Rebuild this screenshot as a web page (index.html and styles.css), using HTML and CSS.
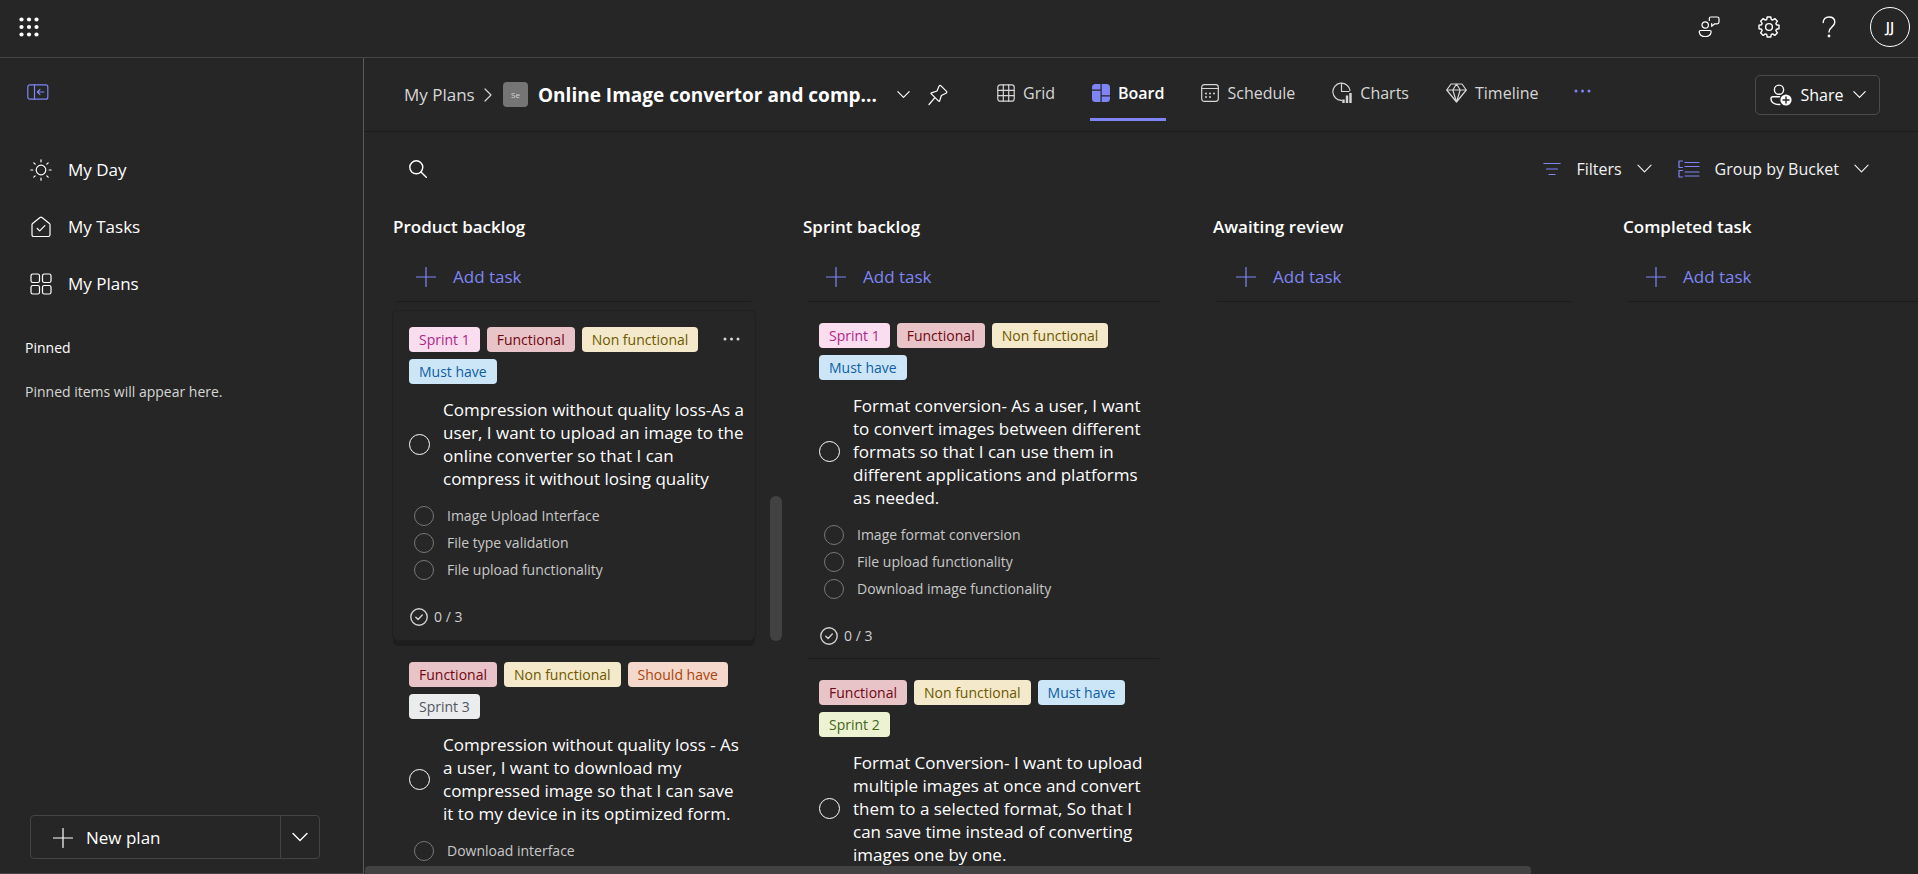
FILE: index.html
```html
<!DOCTYPE html>
<html lang="en">
<head>
<meta charset="utf-8">
<title>Planner</title>
<link rel="stylesheet" href="styles.css">
</head>
<body>
<svg class="sprite" aria-hidden="true">
  <symbol id="chev-down" viewBox="0 0 16 16"><path d="M1 4.5l7 7 7-7"/></symbol>
  <symbol id="plus" viewBox="0 0 20 20"><path d="M10 .5v19M.5 10h19"/></symbol>
  <symbol id="done" viewBox="0 0 18 18"><circle cx="9" cy="9" r="8.2"/><path d="M5.8 9.2l2.3 2.3 4.2-4.4"/></symbol>
</svg>

<header class="topbar">
  <button class="icon-btn waffle" aria-label="App launcher">
    <svg width="20" height="20" viewBox="0 0 20 20" class="fill"><circle cx="2.5" cy="2.5" r="2.1"/><circle cx="10" cy="2.5" r="2.1"/><circle cx="17.5" cy="2.5" r="2.1"/><circle cx="2.5" cy="10" r="2.1"/><circle cx="10" cy="10" r="2.1"/><circle cx="17.5" cy="10" r="2.1"/><circle cx="2.5" cy="17.5" r="2.1"/><circle cx="10" cy="17.5" r="2.1"/><circle cx="17.5" cy="17.5" r="2.1"/></svg>
  </button>
  <div class="top-actions">
    <button class="icon-btn" aria-label="Feedback">
      <svg width="22" height="22" viewBox="0 0 22 22"><circle cx="7.2" cy="9" r="3.2"/><path d="M2.8 14.5h8.8q1.8 0 1.5 1.8-.8 4.2-5.9 4.2t-5.9-4.2Q1 14.500 2.800 14.500z"/><path d="M12.800 1h6.400q1.800 0 1.800 1.800v3.200q0 1.800-1.800 1.800h-2.500l-3 2.500v-2.600M11.300 4.500V2.500q0-1.500 1.500-1.500"/></svg>
    </button>
    <button class="icon-btn" aria-label="Settings">
      <svg width="22" height="22" viewBox="0 0 22 22" class="bold"><circle cx="11" cy="11" r="3.400"/><path d="M9.200 1h3.600l.5 2.600 1.300.5 2.200-1.500 2.600 2.600-1.500 2.200.5 1.300 2.600.5v3.600l-2.600.5-.5 1.300 1.500 2.200-2.600 2.600-2.200-1.500-1.300.5-.5 2.600H9.200l-.5-2.600-1.300-.5-2.200 1.500-2.600-2.600 1.500-2.200-.5-1.300L1 12.800V9.200l2.600-.5.5-1.300-1.500-2.200 2.600-2.600 2.200 1.500 1.300-.5z"/></svg>
    </button>
    <button class="icon-btn" aria-label="Help">
      <svg width="22" height="22" viewBox="0 0 22 22" class="bold"><path d="M5.200 6.500C5.200 3.200 7.500 1 11 1s5.800 2.100 5.800 5.200c0 4.600-5.800 4.800-5.800 9.800"/><circle cx="11" cy="20" r=".7"/></svg>
    </button>
    <button class="avatar" aria-label="Account">JJ</button>
  </div>
</header>

<div class="shell">
  <nav class="sidebar">
    <button class="icon-btn collapse" aria-label="Collapse navigation">
      <svg width="22" height="16" viewBox="0 0 22 16"><rect x=".8" y=".8" width="20" height="14.400" rx="2"/><path d="M7.500.8v14.400M17 8H10.500M13 5.300L10.300 8l2.700 2.700"/></svg>
    </button>
    <ul class="nav">
      <li><a href="#day"><svg width="22" height="22" viewBox="0 0 22 22"><circle cx="11" cy="11" r="4.800"/><path d="M11 .8v2M11 19.200v2M.8 11h2M19.200 11h2M3.800 3.800l1.400 1.400M16.800 16.800l1.400 1.400M3.800 18.200l1.400-1.400M16.800 5.200l1.400-1.400"/></svg>My Day</a></li>
      <li><a href="#tasks"><svg width="22" height="22" viewBox="0 0 22 22"><path d="M2 8.700Q2 8 2.600 7.500L10 1.500q1-.8 2 0l7.400 6q.6.500.6 1.200v10q0 1.800-1.800 1.800H3.800Q2 20.500 2 18.700z"/><path d="M7.200 12.500l2.500 2.400 5.200-5.200"/></svg>My Tasks</a></li>
      <li><a href="#plans"><svg width="22" height="22" viewBox="0 0 22 22"><rect x="1" y="1" width="8.500" height="8.500" rx="1.800"/><rect x="12.500" y="1" width="8.500" height="8.500" rx="1.800"/><rect x="1" y="12.500" width="8.500" height="8.500" rx="1.800"/><rect x="12.500" y="12.500" width="8.500" height="8.500" rx="1.800"/></svg>My Plans</a></li>
    </ul>
    <h2 class="pinned">Pinned</h2>
    <p class="pinned-note">Pinned items will appear here.</p>
    <div class="new-plan">
      <button class="new-main"><svg width="20" height="20"><use href="#plus"/></svg>New plan</button>
      <button class="new-more" aria-label="More plan options"><svg width="16" height="16" class="bold"><use href="#chev-down"/></svg></button>
    </div>
  </nav>

  <main class="main">
    <div class="plan-bar">
      <a class="crumb" href="#plans">My Plans</a>
      <svg class="crumb-sep" width="8" height="14" viewBox="0 0 8 14"><path d="M1 1l6 6-6 6"/></svg>
      <span class="plan-chip">Se</span>
      <h1 class="plan-title">Online Image convertor and comp...</h1>
      <button class="icon-btn title-more" aria-label="Plan options"><svg width="13" height="13" class="bold"><use href="#chev-down"/></svg></button>
      <button class="icon-btn" aria-label="Pin plan"><svg width="20" height="22" viewBox="0 0 20 22"><path d="M11 2.300q.8-1.600 2-.4l5.300 5.300q1.200 1.200-.4 2l-4.500 2.300-1.800 5.500q-.3.900-1 .2L3.300 9.900q-.7-.7.200-1l5.500-1.900zM6.700 13.800L1 20.500"/></svg></button>
      <div class="tabs">
        <a class="tab" href="#grid"><svg width="18" height="18" viewBox="0 0 18 18"><rect x=".8" y=".8" width="16.400" height="16.400" rx="2.500"/><path d="M6.300.8v16.400M11.700.8v16.400M.8 6.300h16.400M.8 11.700h16.400"/></svg>Grid</a>
        <a class="tab active" href="#board"><svg width="18" height="18" viewBox="0 0 18 18" class="fill"><path d="M3.500 0h5v5.500H0v-2Q0 0 3.500 0zM0 6.700h8.500V18h-5Q0 18 0 14.500zM9.700 0h4.800Q18 0 18 3.500v7.800H9.700zM9.700 12.500H18v2q0 3.500-3.500 3.500H9.700z"/></svg>Board</a>
        <a class="tab" href="#schedule"><svg width="18" height="18" viewBox="0 0 18 18"><rect x=".7" y=".7" width="16.600" height="16.600" rx="2.500"/><path d="M.7 4.500h16.600"/><path class="dots" d="M5 9.500h0M9 9.500h0M13 9.500h0M5 13h0M9 13h0"/></svg>Schedule</a>
        <a class="tab" href="#charts"><svg width="20" height="22" viewBox="0 0 20 22"><path d="M10 18.300A8.600 8.600 0 1 1 18 8.500"/><path d="M9.500 1.500v8H17"/><path class="bars" d="M11.500 17.500V21M15 13.500V21M18.500 11V21"/></svg>Charts</a>
        <a class="tab" href="#timeline"><svg width="21" height="20" viewBox="0 0 21 20"><path d="M5 1h11l4.300 6L10.500 19 .7 7zM.7 7h19.600M6.800 7l3.700 12L14.200 7M6.800 7l3.700-6 3.700 6"/></svg>Timeline</a>
        <button class="icon-btn accent" aria-label="More views"><svg width="17" height="4" viewBox="0 0 17 4" class="fill"><circle cx="2" cy="2" r="1.500"/><circle cx="8.500" cy="2" r="1.500"/><circle cx="15" cy="2" r="1.500"/></svg></button>
      </div>
      <button class="share">
        <svg width="22" height="22" viewBox="0 0 22 22" class="bold"><circle cx="9" cy="5.700" r="4.600"/><path d="M9.500 12.800H2.800q-1.800 0-1.800 1.800 0 4 4 5.300 2 .7 4.800.6"/><circle class="solid" cx="16" cy="16" r="5.600"/><path class="cut" d="M16 13v6M13 16h6"/></svg>
        Share
        <svg width="13" height="13" class="bold"><use href="#chev-down"/></svg>
      </button>
    </div>

    <div class="toolbar">
      <button class="icon-btn" aria-label="Search"><svg width="18" height="18" viewBox="0 0 18 18" class="bold"><circle cx="7.300" cy="7.300" r="6.500"/><path d="M12 12l5.500 5.500"/></svg></button>
      <div class="tools">
        <button class="tool"><svg class="accent" width="18" height="14" viewBox="0 0 18 14"><path d="M.8 1.500h16.400M3.500 7h11M6 12.500h6"/></svg>Filters<svg class="tail" width="15" height="15"><use href="#chev-down"/></svg></button>
        <button class="tool"><svg class="accent" width="22" height="18" viewBox="0 0 22 18"><path d="M4.500 1H1v6.500h3.500M4.500 10.500H1V17h3.500M7 2.500h14M7 6.500h14M7 12h14M7 16h14"/></svg>Group by Bucket<svg class="tail" width="15" height="15"><use href="#chev-down"/></svg></button>
      </div>
    </div>

    <div class="board">
      <section class="column">
        <h2>Product backlog</h2>
        <button class="add"><svg width="20" height="20"><use href="#plus"/></svg>Add task</button>
        <div class="cards">
          <article class="card raised">
            <button class="icon-btn card-more" aria-label="More options"><svg width="17" height="4" viewBox="0 0 17 4" class="fill"><circle cx="2" cy="2" r="1.500"/><circle cx="8.500" cy="2" r="1.500"/><circle cx="15" cy="2" r="1.500"/></svg></button>
            <div class="tags"><span class="tag pink">Sprint 1</span><span class="tag red">Functional</span><span class="tag gold">Non functional</span><span class="tag blue">Must have</span></div>
            <label class="task"><input type="checkbox"><span>Compression without quality loss-As a<br>user, I want to upload an image to the<br>online converter so that I can<br>compress it without losing quality</span></label>
            <ul class="checks">
              <li><label><input type="checkbox">Image Upload Interface</label></li>
              <li><label><input type="checkbox">File type validation</label></li>
              <li><label><input type="checkbox">File upload functionality</label></li>
            </ul>
            <div class="count"><svg width="18" height="18" class="bold"><use href="#done"/></svg>0 / 3</div>
          </article>
          <article class="card">
            <div class="tags"><span class="tag red">Functional</span><span class="tag gold">Non functional</span><span class="tag orange">Should have</span><span class="tag grey">Sprint 3</span></div>
            <label class="task"><input type="checkbox"><span>Compression without quality loss - As<br>a user, I want to download my<br>compressed image so that I can save<br>it to my device in its optimized form.</span></label>
            <ul class="checks">
              <li><label><input type="checkbox">Download interface</label></li>
            </ul>
          </article>
        </div>
        <div class="thumb-y"></div>
      </section>

      <section class="column">
        <h2>Sprint backlog</h2>
        <button class="add"><svg width="20" height="20"><use href="#plus"/></svg>Add task</button>
        <div class="cards">
          <article class="card ruled">
            <div class="tags"><span class="tag pink">Sprint 1</span><span class="tag red">Functional</span><span class="tag gold">Non functional</span><span class="tag blue">Must have</span></div>
            <label class="task"><input type="checkbox"><span>Format conversion- As a user, I want<br>to convert images between different<br>formats so that I can use them in<br>different applications and platforms<br>as needed.</span></label>
            <ul class="checks">
              <li><label><input type="checkbox">Image format conversion</label></li>
              <li><label><input type="checkbox">File upload functionality</label></li>
              <li><label><input type="checkbox">Download image functionality</label></li>
            </ul>
            <div class="count"><svg width="18" height="18" class="bold"><use href="#done"/></svg>0 / 3</div>
          </article>
          <article class="card">
            <div class="tags"><span class="tag red">Functional</span><span class="tag gold">Non functional</span><span class="tag blue">Must have</span><span class="tag green">Sprint 2</span></div>
            <label class="task"><input type="checkbox"><span>Format Conversion- I want to upload<br>multiple images at once and convert<br>them to a selected format, So that I<br>can save time instead of converting<br>images one by one.</span></label>
          </article>
        </div>
      </section>

      <section class="column">
        <h2>Awaiting review</h2>
        <button class="add"><svg width="20" height="20"><use href="#plus"/></svg>Add task</button>
      </section>

      <section class="column">
        <h2>Completed task</h2>
        <button class="add"><svg width="20" height="20"><use href="#plus"/></svg>Add task</button>
      </section>
    </div>
    <div class="thumb-x"></div>
  </main>
</div>
</body>
</html>
```
FILE: styles.css
```css
* { box-sizing: border-box; }

body {
  margin: 0;
  height: 100vh;
  display: flex;
  flex-direction: column;
  overflow: hidden;
  background: #262626;
  color: #fff;
  font: 17px/24px "Open Sans", "Noto Sans", sans-serif;
}

h1, h2, p, ul { margin: 0; padding: 0; }
ul { list-style: none; }
a { color: inherit; text-decoration: none; }
button {
  padding: 0;
  border: 0;
  background: none;
  color: inherit;
  font: inherit;
  cursor: pointer;
}

svg {
  flex: none;
  fill: none;
  stroke: currentColor;
  stroke-width: 1.2;
  stroke-linecap: round;
  stroke-linejoin: round;
}
svg.bold { stroke-width: 1.4; }
svg.fill { fill: currentColor; stroke: none; }
.sprite { display: none; }
.dots { stroke-width: 2; }
.bars { stroke-width: 2.4; stroke-linecap: butt; }
.solid { fill: currentColor; stroke: none; }
.cut { stroke: #262626; }
.accent { color: #7f85f5; }
.icon-btn { display: flex; align-items: center; }

/* Top bar */
.topbar {
  flex: none;
  display: flex;
  align-items: center;
  justify-content: space-between;
  height: 58px;
  padding: 0 8px 4px 19px;
  border-bottom: 1px solid #444;
}
.top-actions { display: flex; align-items: center; gap: 22px; }
.top-actions .icon-btn { padding: 0 8px; }
.avatar {
  width: 40px;
  height: 40px;
  border: 1px solid #fff;
  border-radius: 50%;
  font-size: 14px;
  font-weight: 600;
}

.shell { flex: 1; display: flex; min-height: 0; }

/* Sidebar */
.sidebar {
  flex: none;
  display: flex;
  flex-direction: column;
  width: 364px;
  padding: 26px 43px 14px 25px;
  border-right: 1px solid #5a5a5a;
  border-bottom: 1px solid #444;
}
.collapse { padding-left: 2px; color: #7f85f5; align-self: flex-start; }
.nav { margin-top: 41px; }
.nav a {
  display: flex;
  align-items: center;
  gap: 16px;
  height: 57px;
  padding-left: 5px;
}
.pinned { margin-top: 24px; font-size: 14px; font-weight: 400; }
.pinned-note { margin-top: 20px; font-size: 14px; color: #d6d6d6; }
.new-plan {
  display: flex;
  height: 44px;
  margin: auto 0 0 5px;
  border: 1px solid #444;
  border-radius: 4px;
}
.new-main { flex: 1; display: flex; align-items: center; gap: 13px; padding: 2px 0 0 22px; }
.new-more {
  display: flex;
  align-items: center;
  justify-content: center;
  width: 39px;
  border-left: 1px solid #444;
}

/* Plan header */
.main { position: relative; flex: 1; display: flex; flex-direction: column; min-width: 0; overflow: hidden; }
.plan-bar {
  flex: none;
  display: flex;
  align-items: center;
  height: 74px;
  padding: 0 38px 0 40px;
  border-bottom: 1px solid #1c1c1c;
  white-space: nowrap;
}
.crumb { width: 70px; color: #d6d6d6; }
.crumb-sep { margin: 0 11px 0 10px; color: #d6d6d6; }
.plan-chip {
  width: 25px;
  height: 25px;
  margin-right: 10px;
  border-radius: 4px;
  background: #757575;
  color: #d6d6d6;
  font-size: 8px;
  line-height: 25px;
  text-align: center;
}
.plan-title { width: 340px; font-size: 19px; font-weight: 700; }
.title-more { margin: 0 18px 0 19px; }
.tabs { display: flex; gap: 33px; height: 50px; margin-left: 47px; color: #d6d6d6; font-size: 16px; }
.tab {
  display: flex;
  align-items: center;
  gap: 8px;
  height: 46px;
  padding: 0 2px 10px;
  margin-top: 5px;
}
.tabs .icon-btn { height: 36px; margin-top: 3px; }
.tab.active { border-bottom: 3px solid #7f85f5; padding-bottom: 7px; color: #fff; font-weight: 600; }
.tab.active svg { color: #7f85f5; }
.tabs .accent { color: #7f85f5; }
.share {
  display: flex;
  align-items: center;
  justify-content: center;
  gap: 9px;
  width: 125px;
  height: 40px;
  margin-left: auto;
  border: 1px solid #4c4c4c;
  border-radius: 5px;
  font-size: 16px;
}

.toolbar {
  flex: none;
  display: flex;
  align-items: center;
  justify-content: space-between;
  height: 73px;
  padding: 0 49px 0 45px;
}
.tools { display: flex; gap: 26px; }
.tool { display: flex; align-items: center; gap: 15px; color: #f2f2f2; font-size: 16px; }

/* Board */
.board {
  flex: 1;
  display: flex;
  min-height: 0;
  padding-left: 29px;
  overflow: hidden;
}
.column {
  position: relative;
  flex: none;
  display: flex;
  flex-direction: column;
  width: 410px;
}
.column h2 { margin-top: 10px; font-size: 17px; font-weight: 600; }
.add {
  flex: none;
  display: flex;
  align-items: center;
  gap: 17px;
  width: 354px;
  height: 50px;
  margin: 13px 0 0 4px;
  padding-left: 19px;
  border-bottom: 1px solid #1c1c1c;
  color: #7f85f5;
}
.cards { flex: 1; min-height: 0; width: 362px; }
.card { position: relative; padding: 21px 12px 0 16px; }
.card.ruled::after {
  content: "";
  display: block;
  height: 1px;
  margin: 13px -6px 0 -12px;
  background: #1c1c1c;
}
.card.raised {
  margin-top: 9px;
  padding: 16px 12px 14px 16px;
  border-radius: 5px;
  box-shadow: 0 0 0 1px #202020, 0 6px 0 0 #1e1e1e;
  background: #262626;
}
.raised + .card { padding-top: 22px; }
.card-more { position: absolute; top: 26px; right: 15px; color: #d6d6d6; }
.tags { display: flex; flex-wrap: wrap; gap: 7px; }
.tag {
  height: 25px;
  padding: 0 10px;
  border-radius: 4px;
  font-size: 14px;
  line-height: 25px;
}
.pink { background: #fbddf0; color: #ad2785; }
.red { background: #e8c4c9; color: #6e0811; }
.gold { background: #f4eacb; color: #6d5700; }
.blue { background: #cde6f7; color: #0d5ea6; }
.orange { background: #f3d8cb; color: #a9440e; }
.grey { background: #ebecee; color: #515760; }
.green { background: #edf3d2; color: #45631a; }

.task {
  display: flex;
  align-items: center;
  gap: 13px;
  margin: 14px -20px 0 0;
  line-height: 23px;
  white-space: nowrap;
}
input[type="checkbox"] {
  flex: none;
  appearance: none;
  width: 21px;
  height: 21px;
  margin: 0;
  border: 1px solid #fff;
  border-radius: 50%;
}
.checks { margin: 12px 0 0 5px; font-size: 14px; color: #c8c8c8; }
.checks label { display: flex; align-items: center; gap: 13px; height: 27px; }
.checks input[type="checkbox"] { width: 20px; height: 20px; border: 1px solid #777; }
.count {
  display: flex;
  align-items: center;
  gap: 6px;
  height: 18px;
  margin-top: 25px;
  padding-left: 1px;
  font-size: 14px;
  color: #d0d0d0;
}

/* Scroll thumbs */
.thumb-y {
  position: absolute;
  top: 291px;
  left: 377px;
  width: 12px;
  height: 145px;
  border-radius: 6px;
  background: #424242;
}
.thumb-x {
  position: absolute;
  left: 1px;
  bottom: 0;
  width: 75%;
  height: 8px;
  border-radius: 4px 4px 0 0;
  background: #424242;
}
```
